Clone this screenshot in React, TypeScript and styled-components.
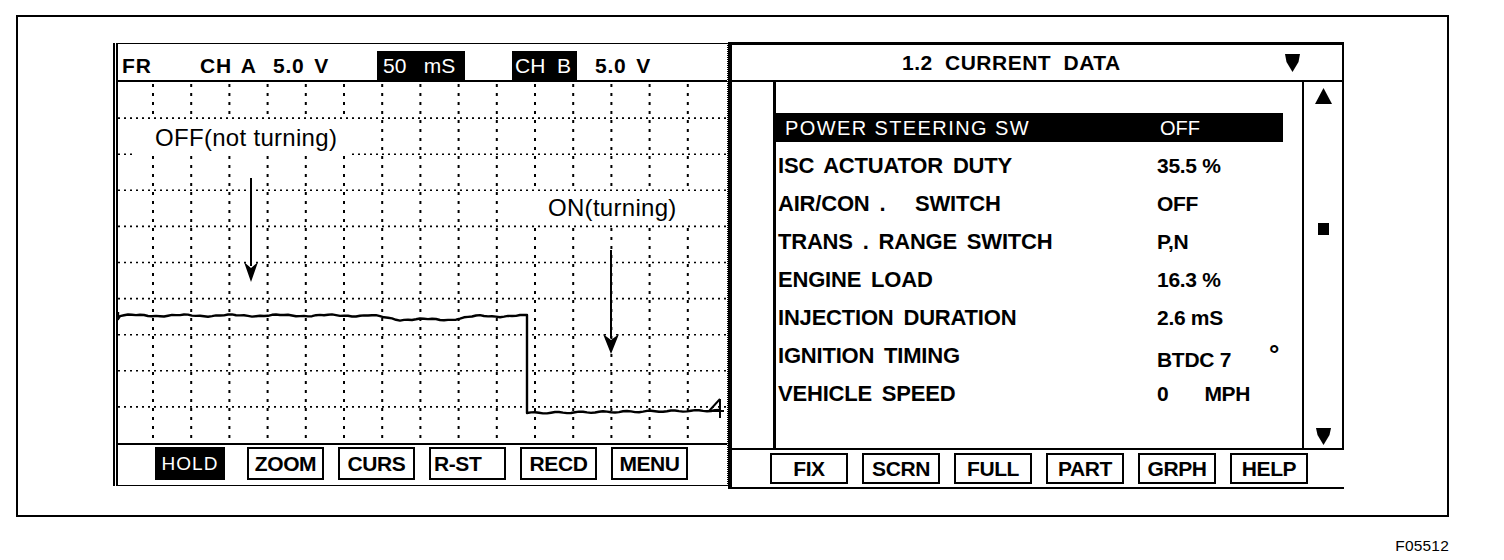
import React from 'react';
import styled, { createGlobalStyle } from 'styled-components';

const GlobalStyle = createGlobalStyle`
  html, body { margin: 0; padding: 0; background: #fff; }
  body { font-family: "Liberation Sans", Arial, Helvetica, sans-serif; color: #000; }
  *, *::before, *::after { box-sizing: border-box; }
`;

const Page = styled.div`
  width: 1504px;
  height: 560px;
  padding: 15px 0 0 16px;
  background: #fff;
  overflow: hidden;
`;

const Frame = styled.div`
  width: 1433px;
  height: 502px;
  border: 2px solid #000;
  display: flex;
  align-items: flex-start;
  padding: 25px 0 0 95px;
`;

/* ---------- Scope (left) panel ---------- */

const ScopePanel = styled.section`
  width: 615px;
  height: 443px;
  margin-top: 1px;
  flex: none;
  display: flex;
  flex-direction: column;
  border-left: 5px double #000;
  border-top: 1px solid #000;
  border-right: 1px dotted #000;
  border-bottom: 1px solid #000;
`;

const ScopeHeader = styled.div`
  height: 38px;
  flex: none;
  display: flex;
  align-items: flex-end;
  border-bottom: 2px solid #000;
`;

const HeaderCell = styled.span<{ $w?: number; $pl?: number }>`
  ${(p) => (p.$w ? `width: ${p.$w}px; flex: none;` : '')}
  padding-left: ${(p) => p.$pl ?? 0}px;
  font-size: 21px;
  font-weight: 700;
  line-height: 29px;
  letter-spacing: 0.8px;
  word-spacing: 3px;
  white-space: pre;
`;

const HeaderBadge = styled.span<{ $w: number; $pl: number; $ml?: number }>`
  width: ${(p) => p.$w}px;
  flex: none;
  margin-left: ${(p) => p.$ml ?? 0}px;
  padding-left: ${(p) => p.$pl}px;
  background: #000;
  color: #fff;
  font-size: 21px;
  font-weight: 400;
  line-height: 29px;
  white-space: pre;
`;

const ScopeGrid = styled.div`
  position: relative;
  height: 361px;
  flex: none;
`;

const ScopeCanvas = styled.svg`
  display: block;
`;

const Annotation = styled.span<{ $left: number; $top: number; $w: number; $h: number; $pl: number }>`
  position: absolute;
  left: ${(p) => p.$left}px;
  top: ${(p) => p.$top}px;
  width: ${(p) => p.$w}px;
  height: ${(p) => p.$h}px;
  padding-left: ${(p) => p.$pl}px;
  background: #fff;
  font-size: 24px;
  font-weight: 400;
  line-height: ${(p) => p.$h}px;
  letter-spacing: 0.3px;
  white-space: nowrap;
`;

const ScopeFooter = styled.div`
  height: 42px;
  flex: none;
  border-top: 2px solid #000;
  display: flex;
  align-items: flex-start;
  gap: 14px;
  padding: 2px 0 0 37px;
`;

const ToolButton = styled.div<{ $w?: number; $h: number; $align?: 'left' | 'center' }>`
  width: ${(p) => p.$w ?? 77}px;
  height: ${(p) => p.$h}px;
  flex: none;
  border: 2px solid #000;
  display: flex;
  align-items: center;
  justify-content: ${(p) => (p.$align === 'left' ? 'flex-start' : 'center')};
  padding-left: ${(p) => (p.$align === 'left' ? 3 : 0)}px;
  font-size: 21px;
  font-weight: 700;
  letter-spacing: -0.4px;
  line-height: 1;
`;

const HoldButton = styled(ToolButton)`
  background: #000;
  border-color: #000;
  color: #fff;
  font-weight: 400;
  font-size: 19px;
  letter-spacing: 1px;
  margin-right: 8px;
`;

/* ---------- Data (right) panel ---------- */

const DataPanel = styled.section`
  width: 616px;
  height: 447px;
  flex: none;
  display: flex;
  flex-direction: column;
  border-left: 4px solid #000;
  border-top: 3px solid #000;
  border-bottom: 2px solid #000;
`;

const DataHeader = styled.div`
  height: 37px;
  flex: none;
  display: flex;
  align-items: center;
  padding: 0 42px 0 170px;
  border-bottom: 2px solid #000;
  border-right: 2px solid #000;
`;

const DataTitle = styled.span`
  font-size: 21px;
  font-weight: 700;
  letter-spacing: 0.5px;
  word-spacing: 6px;
  white-space: pre;
`;

const HeaderMenuIcon = styled.svg`
  margin-left: auto;
  display: block;
`;

const DataBody = styled.div`
  height: 366px;
  flex: none;
  display: flex;
`;

const Gutter = styled.div`
  width: 44px;
  flex: none;
  border-right: 3px solid #000;
`;

const DataList = styled.div`
  flex: 1;
  padding-top: 31px;
  display: flex;
  flex-direction: column;
  gap: 9px;
`;

const DataRow = styled.div<{ $selected?: boolean }>`
  height: 29px;
  margin-right: 19px;
  display: grid;
  grid-template-columns: 379px 1fr;
  align-items: center;
  background: ${(p) => (p.$selected ? '#000' : 'transparent')};
  color: ${(p) => (p.$selected ? '#fff' : '#000')};
`;

const RowLabel = styled.span<{ $selected?: boolean }>`
  padding-left: ${(p) => (p.$selected ? 9 : 2)}px;
  font-size: ${(p) => (p.$selected ? 20 : 22)}px;
  font-weight: ${(p) => (p.$selected ? 400 : 700)};
  letter-spacing: ${(p) => (p.$selected ? 1.4 : -0.2)}px;
  word-spacing: ${(p) => (p.$selected ? 0 : 4)}px;
  white-space: pre;
  line-height: 1;
`;

const RowValue = styled.span<{ $selected?: boolean }>`
  padding-left: ${(p) => (p.$selected ? 5 : 2)}px;
  font-size: ${(p) => (p.$selected ? 20 : 21)}px;
  font-weight: ${(p) => (p.$selected ? 400 : 700)};
  letter-spacing: ${(p) => (p.$selected ? 0 : -0.3)}px;
  white-space: pre;
  line-height: 1;
`;

const Unit = styled.span<{ $ml: number }>`
  margin-left: ${(p) => p.$ml}px;
`;

const Degree = styled.span`
  margin-left: 38px;
  font-size: 26px;
  vertical-align: 4px;
`;

const Scrollbar = styled.div`
  width: 42px;
  flex: none;
  border-left: 2px solid #000;
  border-right: 2px solid #000;
  display: flex;
  flex-direction: column;
  align-items: center;
  padding: 6px 0 3px;
`;

const ScrollThumb = styled.span`
  width: 11px;
  height: 12px;
  margin-top: 119px;
  background: #000;
`;

const ScrollDown = styled.svg`
  margin-top: auto;
  display: block;
`;

const DataFooter = styled.div`
  height: 39px;
  flex: none;
  border-top: 2px solid #000;
  display: flex;
  align-items: flex-start;
  gap: 14px;
  padding: 3px 0 0 38px;
`;

const FigureId = styled.div`
  width: 1433px;
  margin-top: 20px;
  text-align: right;
  font-size: 15.5px;
  line-height: 18px;
  letter-spacing: 0.2px;
`;

/* ---------- data ---------- */

const VX = Array.from({ length: 15 }, (_, k) => 153 + 38.2 * k);
const HY = Array.from({ length: 9 }, (_, k) => 82 + 36.1 * (k + 1));

function baseTop(x: number) {
  if (x < 370) return 315.5;
  if (x < 400) return 315.5 + ((x - 370) / 30) * 4;
  if (x < 450) return 319.5;
  if (x < 480) return 319.5 - ((x - 450) / 30) * 3.5;
  return 316;
}

const topPts: string[] = [];
for (let x = 120; x <= 526; x += 4) {
  topPts.push(`${x},${(baseTop(x) + Math.sin(x * 1.7) * 0.8 + Math.sin(x * 0.43) * 0.4).toFixed(1)}`);
}
const lowPts: string[] = [];
for (let x = 531; x <= 718; x += 4) {
  lowPts.push(`${x},${(413 - ((x - 527) / 191) * 2.5 + Math.sin(x * 1.3) * 0.7).toFixed(1)}`);
}
const wavePath = `M118,312 L118,319 L${topPts.join(' L')} L527,315 L527,413 L${lowPts.join(' L')} L720,410`;

const rows: { label: string; value: React.ReactNode; selected?: boolean }[] = [
  { label: 'POWER STEERING SW', value: 'OFF', selected: true },
  { label: 'ISC ACTUATOR DUTY', value: '35.5 %' },
  { label: 'AIR/CON .   SWITCH', value: 'OFF' },
  { label: 'TRANS . RANGE SWITCH', value: 'P,N' },
  { label: 'ENGINE LOAD', value: '16.3 %' },
  { label: 'INJECTION DURATION', value: '2.6 mS' },
  {
    label: 'IGNITION TIMING',
    value: (
      <>
        BTDC 7<Degree>°</Degree>
      </>
    ),
  },
  {
    label: 'VEHICLE SPEED',
    value: (
      <>
        0<Unit $ml={36}>MPH</Unit>
      </>
    ),
  },
];

const scopeButtons: { text: string; align?: 'left' | 'center' }[] = [
  { text: 'ZOOM' },
  { text: 'CURS' },
  { text: 'R-ST', align: 'left' },
  { text: 'RECD' },
  { text: 'MENU' },
];

const dataButtons = ['FIX', 'SCRN', 'FULL', 'PART', 'GRPH', 'HELP'];

export default function App() {
  return (
    <>
      <GlobalStyle />
      <Page>
        <Frame>
          <ScopePanel>
            <ScopeHeader>
              <HeaderCell $w={82} $pl={4}>FR</HeaderCell>
              <HeaderCell $w={73}>CH A</HeaderCell>
              <HeaderCell $w={104}>5.0 V</HeaderCell>
              <HeaderBadge $w={88} $pl={6}>50   mS</HeaderBadge>
              <HeaderBadge $w={65} $pl={3} $ml={47}>CH  B</HeaderBadge>
              <HeaderCell $pl={18}>5.0 V</HeaderCell>
            </ScopeHeader>

            <ScopeGrid>
              <ScopeCanvas width={609} height={361} viewBox="118 82 609 361">
                {HY.map((y) => (
                  <line
                    key={`h${y}`}
                    x1={118}
                    x2={727}
                    y1={y}
                    y2={y}
                    stroke="#000"
                    strokeWidth={1.6}
                    strokeDasharray="2 4"
                  />
                ))}
                {VX.map((x) => (
                  <line
                    key={`v${x}`}
                    x1={x}
                    x2={x}
                    y1={84}
                    y2={443}
                    stroke="#000"
                    strokeWidth={2}
                    strokeDasharray="3 6"
                  />
                ))}
                <path d={wavePath} fill="none" stroke="#000" strokeWidth={2.4} strokeLinejoin="round" />
                <path d="M720,399 L720,418 M720,399 L709,411 L724,411" fill="none" stroke="#000" strokeWidth={2} />
                <line x1={251} x2={251} y1={178} y2={266} stroke="#000" strokeWidth={2} />
                <polygon points="244,262 251,268 258,262 251,282" fill="#000" />
                <line x1={611} x2={611} y1={250} y2={338} stroke="#000" strokeWidth={2} />
                <polygon points="603,334 611,340 619,334 611,354" fill="#000" />
              </ScopeCanvas>
              <Annotation $left={14} $top={37} $w={220} $h={37} $pl={23}>
                OFF(not turning)
              </Annotation>
              <Annotation $left={412} $top={109} $w={172} $h={34} $pl={18}>
                ON(turning)
              </Annotation>
            </ScopeGrid>

            <ScopeFooter>
              <HoldButton $w={70} $h={33}>HOLD</HoldButton>
              {scopeButtons.map((b) => (
                <ToolButton key={b.text} $w={77} $h={33} $align={b.align}>
                  {b.text}
                </ToolButton>
              ))}
            </ScopeFooter>
          </ScopePanel>

          <DataPanel>
            <DataHeader>
              <DataTitle>1.2 CURRENT DATA</DataTitle>
              <HeaderMenuIcon width={15} height={18} viewBox="0 0 15 18">
                <polygon points="0,0 15,0 13.5,8 7.5,18 1.5,8" fill="#000" />
              </HeaderMenuIcon>
            </DataHeader>

            <DataBody>
              <Gutter />
              <DataList>
                {rows.map((r) => (
                  <DataRow key={r.label} $selected={r.selected}>
                    <RowLabel $selected={r.selected}>{r.label}</RowLabel>
                    <RowValue $selected={r.selected}>{r.value}</RowValue>
                  </DataRow>
                ))}
              </DataList>
              <Scrollbar>
                <svg width={17} height={16} viewBox="0 0 17 16">
                  <polygon points="8.5,0 17,16 0,16" fill="#000" />
                </svg>
                <ScrollThumb />
                <ScrollDown width={15} height={17} viewBox="0 0 15 17">
                  <polygon points="0,0 15,0 13.5,7 7.5,17 1.5,7" fill="#000" />
                </ScrollDown>
              </Scrollbar>
            </DataBody>

            <DataFooter>
              {dataButtons.map((t) => (
                <ToolButton key={t} $w={78} $h={31}>
                  {t}
                </ToolButton>
              ))}
            </DataFooter>
          </DataPanel>
        </Frame>
        <FigureId>F05512</FigureId>
      </Page>
    </>
  );
}
